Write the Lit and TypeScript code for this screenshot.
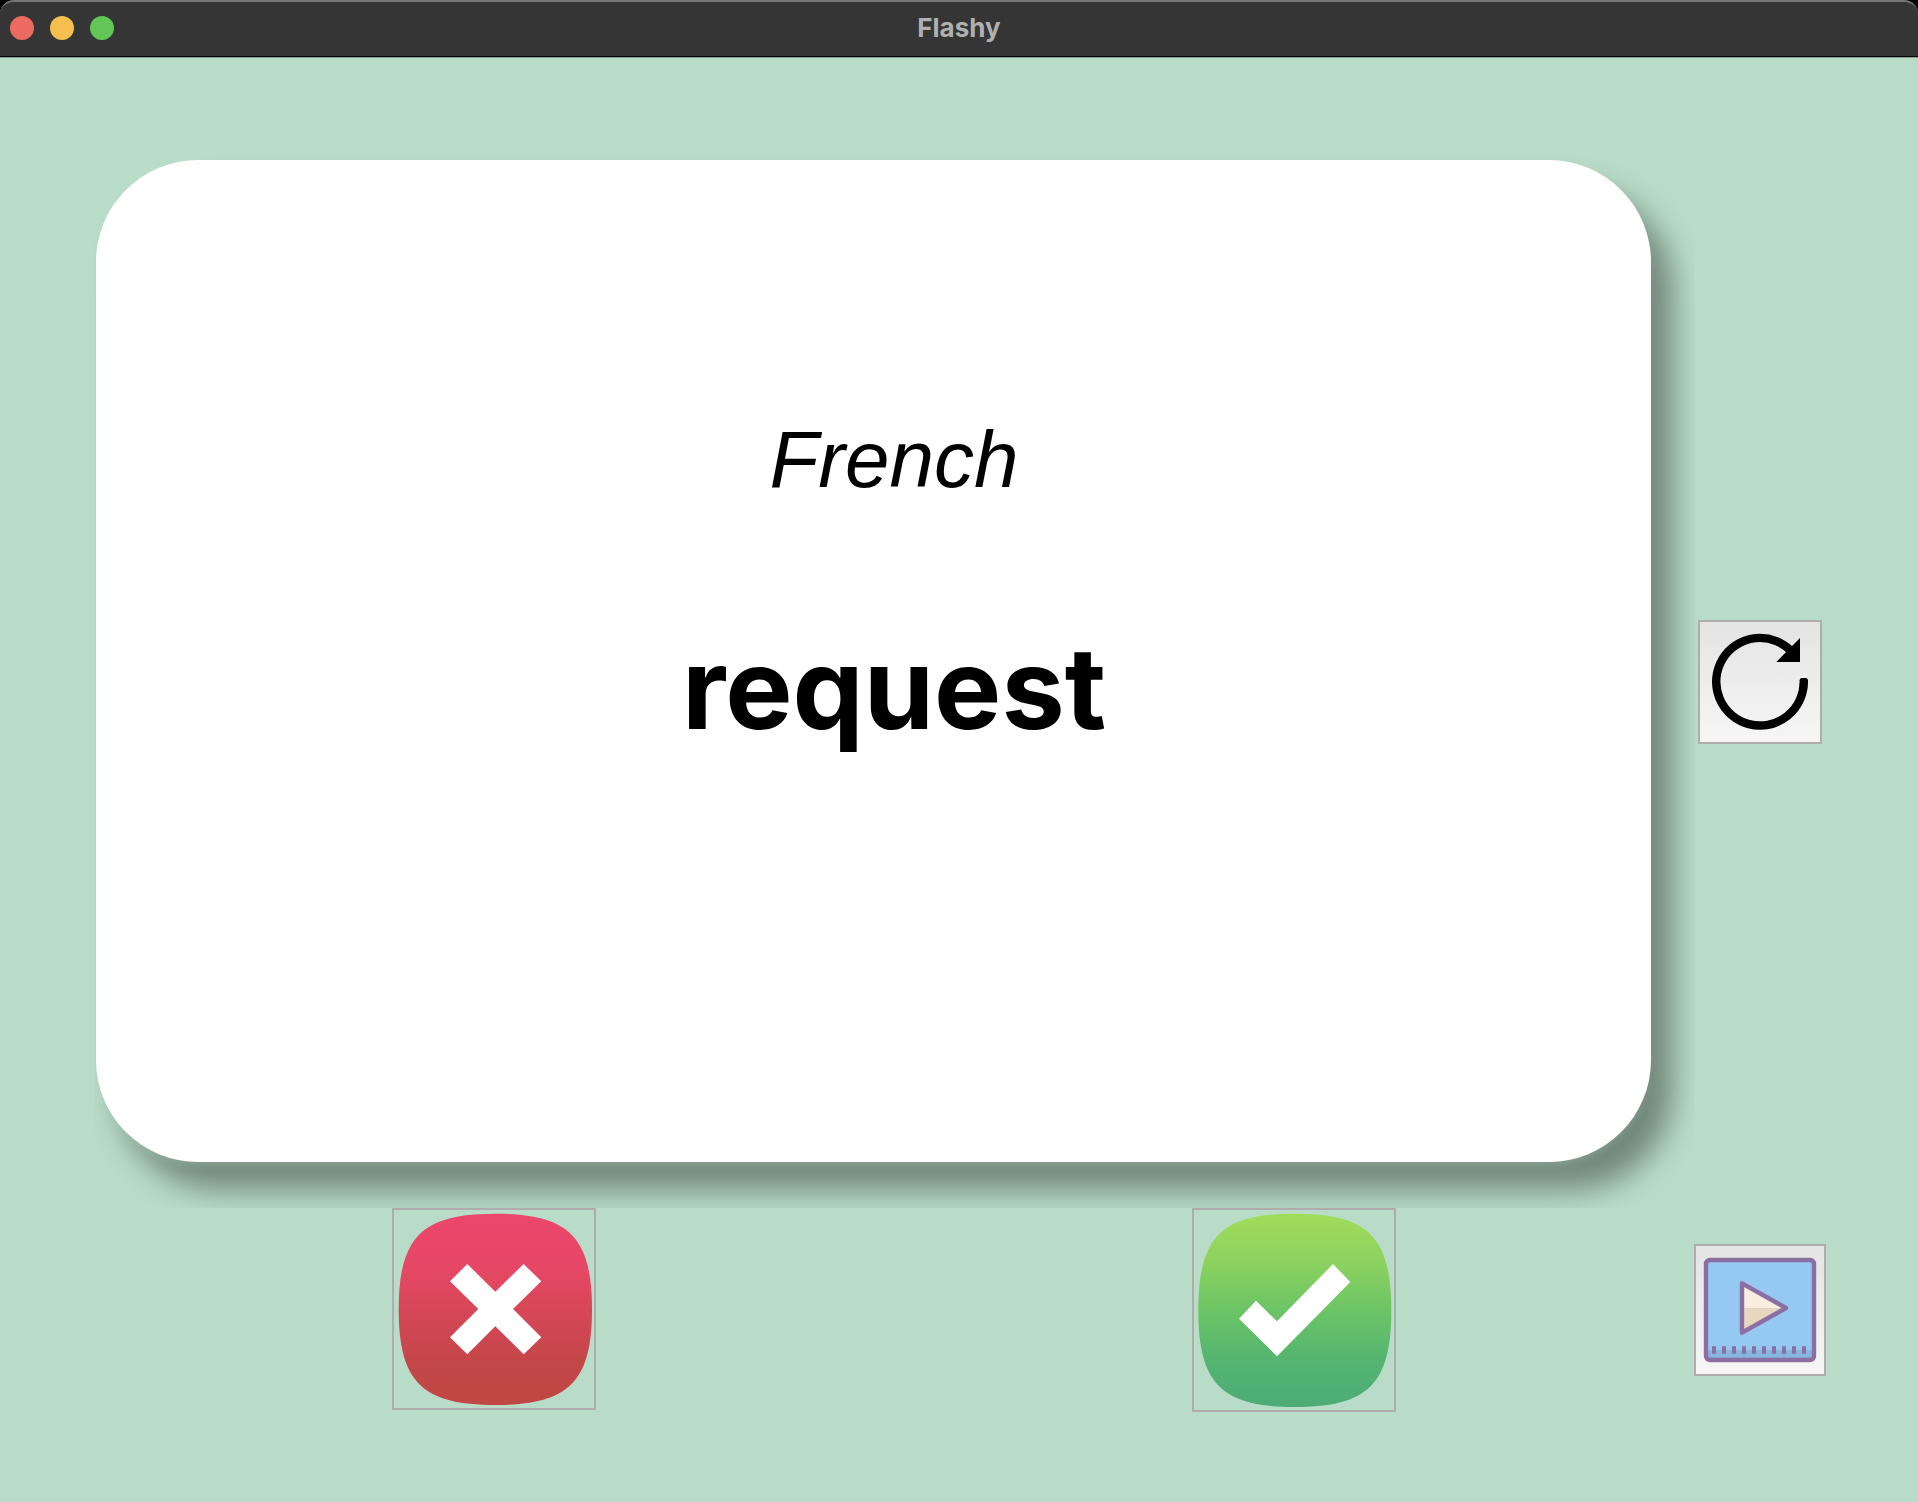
import { LitElement, html, css } from "lit";
import { customElement, state } from "lit/decorators.js";

@customElement("app-root")
export class AppRoot extends LitElement {
  @state() private language = "French";
  @state() private word = "request";

  static styles = css`
    :host {
      display: flex;
      flex-direction: column;
      min-height: 100vh;
      background: #b9dcc8;
      font-family: Inter, "Liberation Sans", sans-serif;
      color: #000;
    }
    .frame {
      background: #000;
    }
    .titlebar {
      box-sizing: border-box;
      height: 58px;
      display: grid;
      grid-template-columns: 1fr auto 1fr;
      align-items: center;
      padding: 0 10px 4px;
      background: #353535;
      border-top: 2px solid #767676;
      border-radius: 14px 14px 0 0;
      box-shadow: inset 0 -1px #8d9a92, inset 0 -2px #000;
    }
    .lights {
      display: flex;
      gap: 16px;
    }
    .light {
      width: 24px;
      height: 24px;
      padding: 0;
      border: 0;
      border-radius: 50%;
    }
    .close { background: #ed6b60; }
    .minimise { background: #f5bf4f; }
    .zoom { background: #62c656; }
    .title {
      margin: 0;
      font-size: 26px;
      line-height: 32px;
      font-weight: 700;
      color: #b0b0b0;
    }
    .board {
      display: grid;
      grid-template-columns: 1fr 1fr 132px;
      place-items: center;
      padding: 98px 92px 90px 94px;
    }
    .canvas {
      grid-column: span 2;
      box-sizing: border-box;
      width: 100%;
      aspect-ratio: 1600 / 1052;
      padding: 4px 43px 46px 2px;
      display: flex;
      overflow: hidden;
    }
    .card {
      flex: 1;
      display: flex;
      flex-direction: column;
      align-items: center;
      padding: 252px 0 0 41px;
      background: #fff;
      border-radius: 102px;
      box-shadow:
        0 6px 10px -4px rgba(185, 220, 200, 0.35),
        22px 28px 30px rgba(0, 0, 0, 0.39);
    }
    .language {
      margin: 0;
      font-family: "Liberation Sans", Arial, sans-serif;
      font-size: 80px;
      line-height: 96px;
      font-style: italic;
      font-weight: 400;
    }
    .word {
      margin: 108px 0 0;
      font-size: 113px;
      line-height: 144px;
      font-weight: 700;
    }
    .action {
      box-sizing: content-box;
      padding: 0;
      border: 2px solid #b0abad;
      background: transparent;
      display: block;
    }
    .answer {
      align-self: start;
    }
    .plain {
      background: linear-gradient(#e4e4e4, #f6f6f6);
    }
    .action svg {
      display: block;
    }
  `;

  render() {
    return html`
      <header class="frame">
        <div class="titlebar">
          <div class="lights">
            <button class="light close" aria-label="Close"></button>
            <button class="light minimise" aria-label="Minimise"></button>
            <button class="light zoom" aria-label="Zoom"></button>
          </div>
          <h1 class="title">Flashy</h1>
        </div>
      </header>
      <main class="board">
        <section class="canvas">
          <div class="card">
            <p class="language">${this.language}</p>
            <p class="word">${this.word}</p>
          </div>
        </section>
        <button class="action plain" aria-label="Restart">
          <svg width="120" height="120" viewBox="2 2 120 120">
            <path d="M105.8 60.500A43.800 43.800 0 1 1 94 31.800" fill="none" stroke="#000" stroke-width="8.400" />
            <path d="M101.600 61Q101.600 58 104 58H107.600Q110 58 110 61Z" />
            <path d="M102 18V42H78.300Z" />
          </svg>
        </button>
        <button class="action answer" aria-label="Unknown">
          <svg width="200" height="198" viewBox="2 2 200 198">
            <defs>
              <linearGradient id="red" x1="0" y1="0" x2="0" y2="1">
                <stop offset="0" stop-color="#ec466d" />
                <stop offset="0.3" stop-color="#e54764" />
                <stop offset="0.78" stop-color="#c34648" />
                <stop offset="1" stop-color="#c04743" />
              </linearGradient>
            </defs>
            <path fill="url(#red)" d="M103.300 5.700C176 5.700 200 28 200 101.300S176 197 103.300 197 6.700 174.600 6.700 101.300 30.600 5.700 103.300 5.700Z" />
            <path fill="#fff" d="M75.300 56L103.300 83.700 131.700 56 149.300 73.300 121 101 149.300 129.300 131.700 146.300 103.300 118.300 75.300 146.300 58 129.300 86.300 101 58 73.300Z" />
          </svg>
        </button>
        <button class="action answer" aria-label="Known">
          <svg width="200" height="200" viewBox="2 2 200 200">
            <defs>
              <linearGradient id="green" x1="0" y1="0" x2="0" y2="1">
                <stop offset="0" stop-color="#a2dc5a" />
                <stop offset="0.25" stop-color="#8dd25f" />
                <stop offset="0.5" stop-color="#6bc466" />
                <stop offset="0.75" stop-color="#55b570" />
                <stop offset="1" stop-color="#4dab77" />
              </linearGradient>
            </defs>
            <path fill="url(#green)" d="M102.800 5.700C175.500 5.700 199.300 28 199.300 102.300S175.500 199 102.800 199 6.300 176.500 6.300 102.300 30 5.700 102.800 5.700Z" />
            <path fill="#fff" d="M141 56L158.300 74 85 148.300 47 110.700 64 92.700 85 113.300Z" />
          </svg>
        </button>
        <button class="action plain" aria-label="Play">
          <svg width="128" height="128" viewBox="2 2 128 128">
            <rect x="12" y="16" width="108" height="100" rx="4" fill="#96c8f4" />
            <path d="M14 106H118V114H14Z" fill="#86b5de" />
            <rect x="12" y="16" width="108" height="100" rx="4" fill="none" stroke="#8b6fa3" stroke-width="4.400" />
            <path d="M48 39L92 64.200H48Z" fill="#f8eddf" />
            <path d="M48 64.200H92L48 89Z" fill="#e8d7bf" />
            <path d="M48 39.300L92 64 48 88.700Z" fill="none" stroke="#8b6fa3" stroke-width="4.400" stroke-linejoin="round" />
            <path d="M18 106H112" fill="none" stroke="#8b6fa3" stroke-width="7.600" stroke-dasharray="4 6" />
          </svg>
        </button>
      </main>
    `;
  }
}
